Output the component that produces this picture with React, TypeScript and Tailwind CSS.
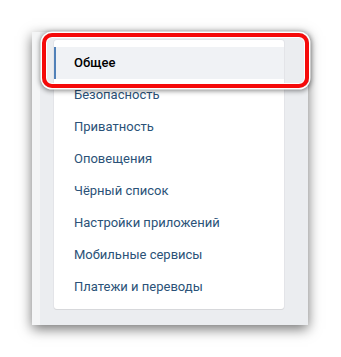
import React from "react";

const items = [
  "Общее",
  "Безопасность",
  "Приватность",
  "Оповещения",
  "Чёрный список",
  "Настройки приложений",
  "Мобильные сервисы",
  "Платежи и переводы",
];

export default function App() {
  return (
    <div className="relative w-[341px] h-[357px] overflow-hidden bg-white font-['Roboto',sans-serif]">
      <div className="pt-[32px] pl-[32px]">
        <div className="flex w-[276px] h-[293px] bg-[#ebedf0] shadow-[0_4px_12px_rgba(0,0,0,0.55)]">
          <div className="w-[8px] bg-[#f4f5f6]" />
          <div className="ml-[14px] mt-[8px] w-[230px] h-[269px] rounded-[3px] bg-white pt-[7px] shadow-[0_1px_0_0_#d7d8db,0_0_0_1px_#e3e4e8]">
            {items.map((label, i) => (
              <div
                key={label}
                className={
                  i === 0
                    ? "flex h-[32px] items-center border-l-2 border-[#5181b8] bg-[#f0f2f5] pl-[18px] text-[13px] font-medium text-black"
                    : "flex h-[32px] items-center pl-[20px] text-[13px] text-[#2b5278]"
                }
              >
                {label}
              </div>
            ))}
          </div>
        </div>
      </div>

      {/* red highlight frame */}
      <div className="absolute left-[42px] top-[33px] w-[267px] h-[55px] rounded-[10px] border-4 border-[#f50a0a] shadow-[0_0_0_1.5px_#fff,inset_0_0_0_1px_#fff,0_1px_5px_1.5px_rgba(0,0,0,0.45)]" />
    </div>
  );
}
